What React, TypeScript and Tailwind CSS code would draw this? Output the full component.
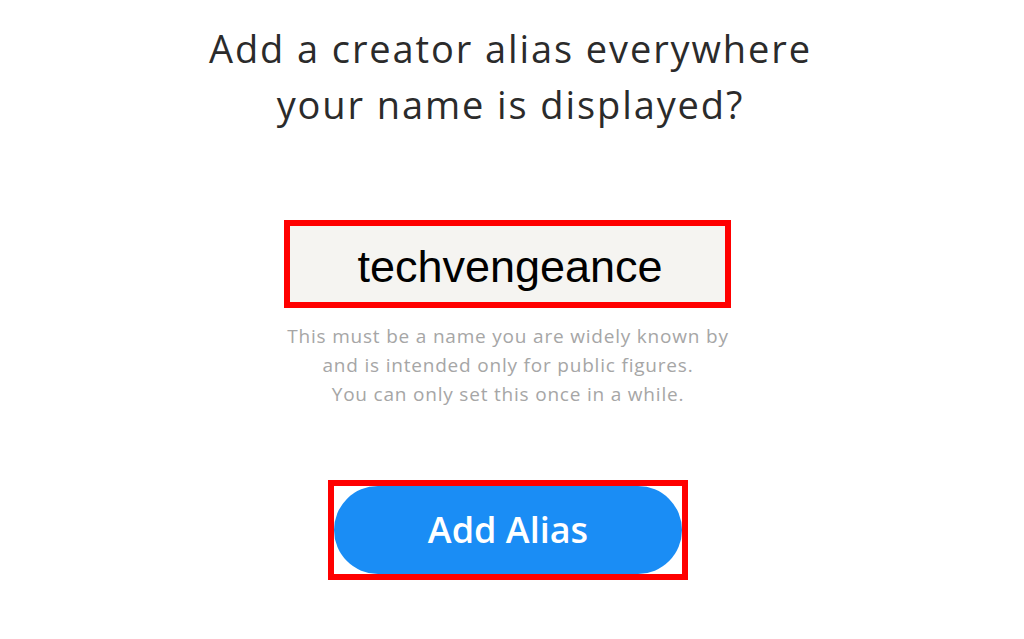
export default function App() {
  return (
    <main className="flex min-h-screen w-full flex-col items-center bg-white pt-[20px] font-['Open_Sans',sans-serif]">
      <h1 className="mr-[3px] text-center text-[38px] font-medium leading-[56px] tracking-[1.9px] text-[#2b2b2b]">
        Add a creator alias everywhere
        <br />
        your name is displayed?
      </h1>

      <div className="mr-[10px] mt-[88px] flex h-[88px] w-[447px] items-center justify-center border-[6px] border-[#ff0000] bg-[#f5f4f1] pl-[6px] pt-[4px]">
        <span className="font-['Liberation_Sans',Arial,sans-serif] text-[45px] leading-none text-black">
          techvengeance
        </span>
      </div>

      <p className="mr-[8px] mt-[14px] text-center text-[19px] leading-[29px] tracking-[0.8px] text-[#a6a6a6]">
        This must be a name you are widely known by
        <br />
        and is intended only for public figures.
        <br />
        You can only set this once in a while.
      </p>

      <div className="mr-[8px] mt-[71px] h-[100px] w-[360px] border-[6px] border-[#ff0000] bg-white">
        <button
          type="button"
          className="flex h-full w-full items-center justify-center rounded-full bg-[#1a8df5] text-[36px] font-semibold text-white"
        >
          Add Alias
        </button>
      </div>
    </main>
  );
}
